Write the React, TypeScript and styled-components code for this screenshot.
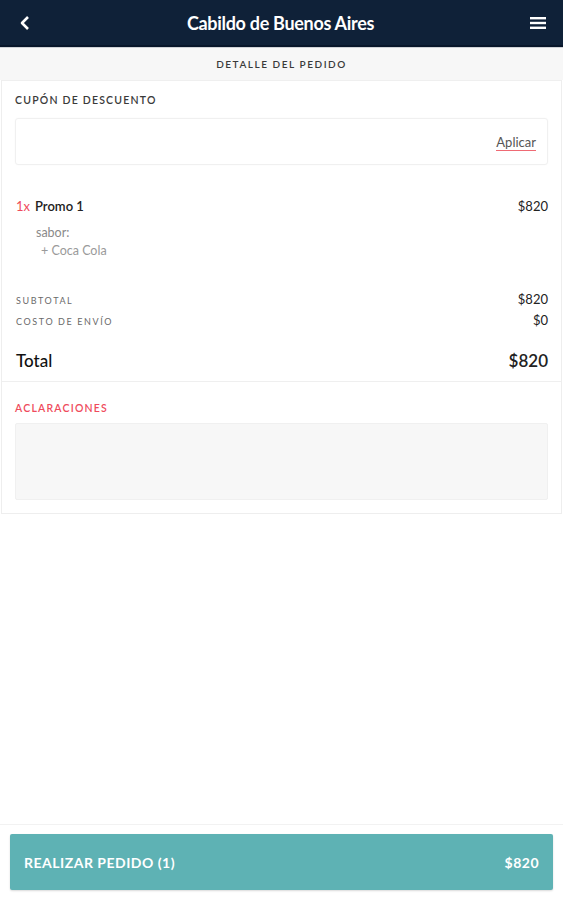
import React from "react";
import styled, { createGlobalStyle } from "styled-components";

const Global = createGlobalStyle`
  html, body { margin: 0; padding: 0; background: #fff; }
  body { font-family: Lato, "Open Sans", sans-serif; }
  * { box-sizing: border-box; }
`;

const Page = styled.div`
  width: 563px;
  height: 900px;
  display: flex;
  flex-direction: column;
  background: #fff;
`;

const Header = styled.header`
  height: 47px;
  background: #0f2138;
  border-bottom: 2px solid #08162a;
  display: flex;
  align-items: center;
  justify-content: space-between;
  padding: 0 16px 0 16px;
  color: #fff;
`;

const Title = styled.h1`
  margin: 0 0 0 -2px;
  font-size: 18px;
  font-weight: 700;
  letter-spacing: -0.3px;
`;

const IconBtn = styled.div`
  width: 18px;
  height: 18px;
  display: flex;
  align-items: center;
  justify-content: center;
`;

const SubHeader = styled.div`
  height: 33px;
  background: #f7f7f7;
  border-top: 1px solid #cfd2d6;
  display: flex;
  align-items: center;
  justify-content: center;
  font-size: 10px;
  letter-spacing: 1.55px;
  color: #3a3a3a;
  font-weight: 600;
`;

const Card = styled.div`
  margin: 0 1px;
  background: #fff;
  border: 1px solid #eeeeee;
  border-top: 1px solid #efefef;
`;

const Section = styled.div<{ $pad?: string; $divider?: boolean }>`
  padding: ${(p) => p.$pad || "0 14px"};
  border-bottom: ${(p) => (p.$divider ? "1px solid #efefef" : "none")};
`;

const Label = styled.div<{ $red?: boolean }>`
  font-size: 10.5px;
  letter-spacing: 1.2px;
  font-weight: 600;
  color: ${(p) => (p.$red ? "#ef4b5c" : "#3a3a3a")};
`;

const CouponBox = styled.div`
  margin-top: 12px;
  height: 47px;
  border: 1px solid #f0f0f0;
  border-radius: 3px;
  box-shadow: 0 0 2px rgba(0, 0, 0, 0.03);
  display: flex;
  align-items: center;
  justify-content: flex-end;
  padding: 0 11px 0 0;
`;

const Apply = styled.span`
  font-size: 13px;
  color: #555;
  border-bottom: 1px solid #ef6a74;
  line-height: 15px;
  padding-top: 2px;
`;

const Row = styled.div<{ $mt?: number }>`
  display: flex;
  justify-content: space-between;
  align-items: baseline;
  margin-top: ${(p) => p.$mt || 0}px;
`;

const ItemName = styled.span`
  font-size: 13px;
  color: #222;
  font-weight: 600;
`;

const Qty = styled.span`
  color: #ef4b5c;
  font-weight: 400;
  margin-right: 5px;
`;

const Price = styled.span<{ $size?: number; $bold?: boolean }>`
  font-size: ${(p) => p.$size || 13}px;
  color: #222;
  font-weight: ${(p) => (p.$bold ? 600 : 400)};
`;

const OptTitle = styled.div`
  margin: 11px 0 0 20px;
  font-size: 12.5px;
  color: #8a8a8a;
`;

const OptItem = styled.div`
  margin: 3px 0 0 25px;
  font-size: 12.5px;
  color: #9a9a9a;
`;

const SmallLabel = styled.span`
  font-size: 9px;
  letter-spacing: 1.6px;
  color: #6a6a6a;
`;

const TotalLabel = styled.span`
  font-size: 17px;
  color: #111;
  font-weight: 500;
`;

const Notes = styled.div`
  margin-top: 9px;
  height: 77px;
  background: #f7f7f7;
  border: 1px solid #f0f0f0;
  border-radius: 2px;
`;

const Spacer = styled.div`
  flex: 1;
`;

const Footer = styled.div`
  border-top: 1px solid #f2f2f2;
  padding: 9px 10px 10px 10px;
`;

const OrderButton = styled.button`
  width: 100%;
  height: 56px;
  background: #5eb2b4;
  border: none;
  border-radius: 2px;
  box-shadow: 0 1px 2px rgba(0, 0, 0, 0.15);
  display: flex;
  align-items: center;
  justify-content: space-between;
  padding: 0 14px;
  color: #fff;
  font-family: Lato, sans-serif;
  font-size: 14px;
  font-weight: 700;
  letter-spacing: 0.5px;
`;

export default function App() {
  return (
    <Page>
      <Global />
      <Header>
        <IconBtn>
          <svg width="12" height="16" viewBox="0 0 12 16">
            <path d="M9 2 L3 8 L9 14" stroke="#fff" strokeWidth="2.6" fill="none" strokeLinejoin="round" />
          </svg>
        </IconBtn>
        <Title>Cabildo de Buenos Aires</Title>
        <IconBtn>
          <svg width="16" height="14" viewBox="0 0 16 14">
            <rect x="0" y="1" width="16" height="2.4" fill="#fff" />
            <rect x="0" y="5.8" width="16" height="2.4" fill="#fff" />
            <rect x="0" y="10.6" width="16" height="2.4" fill="#fff" />
          </svg>
        </IconBtn>
      </Header>
      <SubHeader>DETALLE DEL PEDIDO</SubHeader>
      <Card>
        <Section $pad="13px 13px 0 13px">
          <Label>CUPÓN DE DESCUENTO</Label>
          <CouponBox>
            <Apply>Aplicar</Apply>
          </CouponBox>
        </Section>
        <Section $pad="33px 13px 0 14px">
          <Row>
            <ItemName>
              <Qty>1x</Qty>Promo 1
            </ItemName>
            <Price>$820</Price>
          </Row>
          <OptTitle>sabor:</OptTitle>
          <OptItem>+ Coca Cola</OptItem>
        </Section>
        <Section $pad="33px 13px 10px 14px" $divider>
          <Row>
            <SmallLabel>SUBTOTAL</SmallLabel>
            <Price>$820</Price>
          </Row>
          <Row $mt={5}>
            <SmallLabel>COSTO DE ENVÍO</SmallLabel>
            <Price>$0</Price>
          </Row>
          <Row $mt={22}>
            <TotalLabel>Total</TotalLabel>
            <Price $size={17} $bold>$820</Price>
          </Row>
        </Section>
        <Section $pad="20px 13px 13px 13px">
          <Label $red>ACLARACIONES</Label>
          <Notes />
        </Section>
      </Card>
      <Spacer />
      <Footer>
        <OrderButton>
          <span>REALIZAR PEDIDO (1)</span>
          <span>$820</span>
        </OrderButton>
      </Footer>
    </Page>
  );
}
